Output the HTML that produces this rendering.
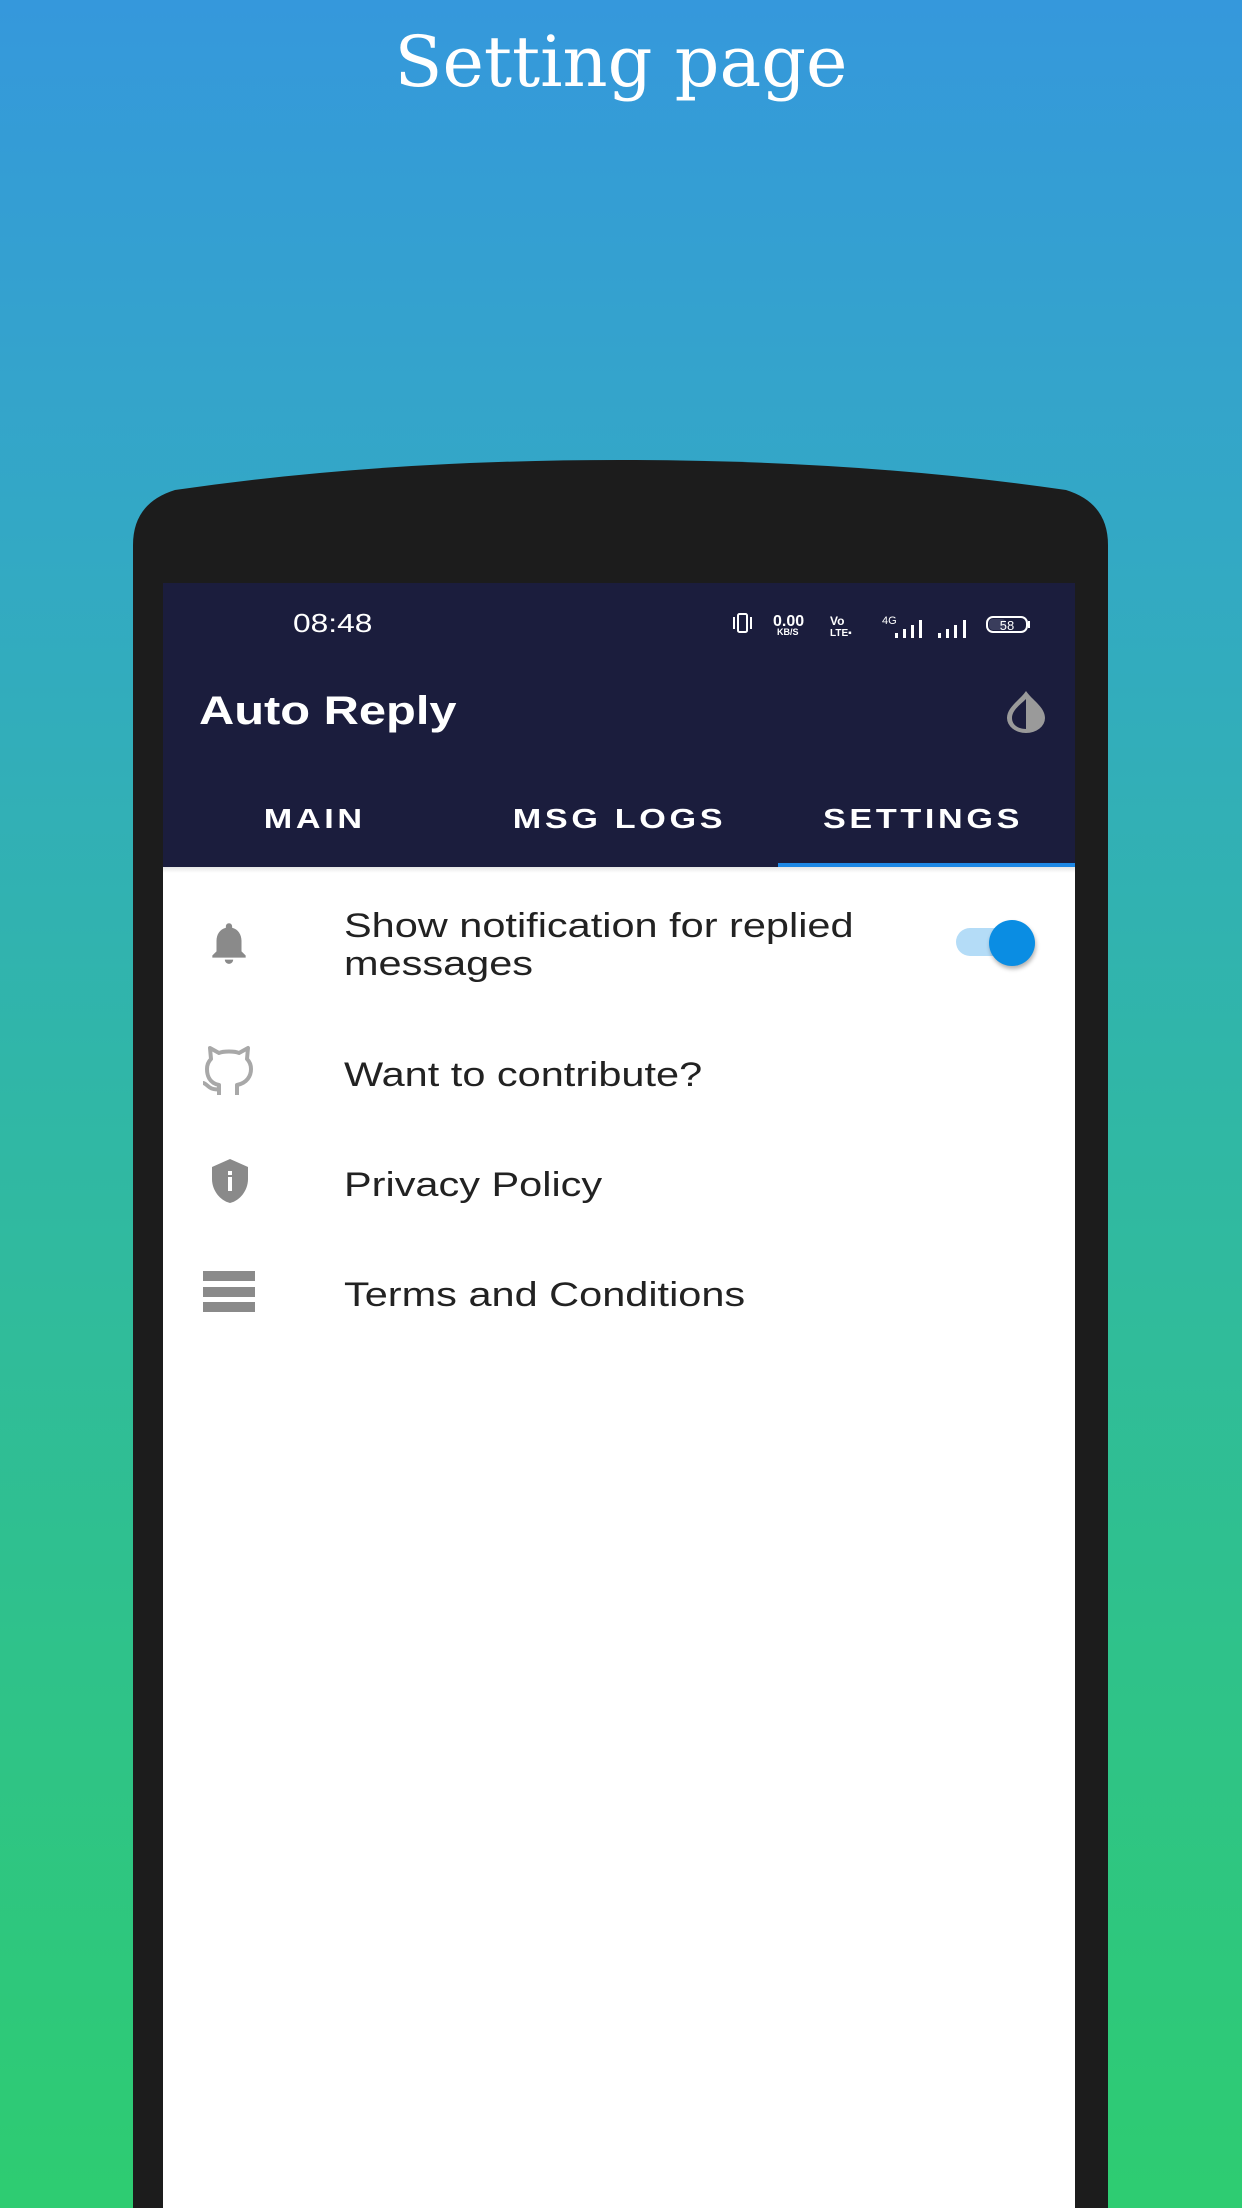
<!DOCTYPE html>
<html><head><meta charset="utf-8"><style>
*{margin:0;padding:0;box-sizing:border-box}
body{width:1242px;height:2208px;overflow:hidden;position:relative;font-family:"Liberation Sans",sans-serif;background:linear-gradient(180deg,#3598dc 0%,#33a9c4 25%,#30b7a6 50%,#2fc28a 75%,#2ecc71 100%)}
.abs{position:absolute}
.title{left:0;width:1242px;top:12px;text-align:center;color:#fff;font-family:"DejaVu Serif","Liberation Serif",serif;font-size:70px;line-height:100px}
.bar{background:#1b1d3d}
.sx{transform:scaleX(1.22);transform-origin:0 0}
.t{color:#222;font-size:34px;white-space:nowrap}
.tab{color:#fff;font-size:28px;font-weight:bold;letter-spacing:3px;width:304px;text-align:center;top:801px;line-height:36px}
.tab span{display:inline-block;transform:scaleX(1.22)}
</style></head><body>
<div class="abs title">Setting page</div>
<svg class="abs" style="left:0;top:0" width="1242" height="2208">
<path d="M133,2208 L133,545 Q133,503 175,490 Q380,460 620,460 Q860,460 1066,490 Q1108,503 1108,545 L1108,2208 Z" fill="#1c1c1c"/>
</svg>
<div class="abs" style="left:163px;top:583px;width:912px;height:1625px;background:#fff"></div>
<div class="abs bar" style="left:163px;top:583px;width:912px;height:284px"></div>
<div class="abs" style="left:163px;top:867px;width:912px;height:6px;background:linear-gradient(#e6e6e6,#fff)"></div>
<div class="abs" style="left:778px;top:863px;width:297px;height:4px;background:#1e88e5"></div>
<div class="abs sx" style="left:293px;top:607px;color:#fff;font-size:26px;line-height:32px">08:48</div>
<svg class="abs" style="left:725px;top:605px" width="320" height="40">
<g fill="none" stroke="#fff" stroke-width="2">
<rect x="13" y="9" width="9" height="18" rx="1.5"/>
<path d="M9,12 v12 M26,12 v12"/>
<rect x="262" y="12" width="40" height="15" rx="6"/>
</g>
<rect x="264" y="14" width="17" height="11" rx="4" fill="#3a3d5c"/>
<text x="282" y="25" fill="#fff" font-size="13" font-family="Liberation Sans" text-anchor="middle">58</text>
<path d="M303,16 h2 v7 h-2z" fill="#fff"/>
<text x="48" y="21" fill="#fff" font-size="16" font-weight="bold" font-family="Liberation Sans">0.00</text>
<text x="52" y="30" fill="#fff" font-size="9" font-weight="bold" font-family="Liberation Sans">KB/S</text>
<text x="105" y="20" fill="#fff" font-size="12" font-weight="bold" font-family="Liberation Sans">Vo</text>
<text x="105" y="31" fill="#fff" font-size="10" font-weight="bold" font-family="Liberation Sans">LTE▪</text>
<text x="157" y="19" fill="#fff" font-size="11" font-family="Liberation Sans">4G</text>
<g fill="#fff"><rect x="170" y="28" width="3" height="5"/><rect x="178" y="24" width="3" height="9"/><rect x="186" y="20" width="3" height="13"/><rect x="194" y="15" width="3" height="18"/>
<rect x="213" y="28" width="3" height="5"/><rect x="221" y="24" width="3" height="9"/><rect x="229" y="20" width="3" height="13"/><rect x="238" y="15" width="3" height="18"/></g>
</svg>
<div class="abs sx" style="left:199px;top:686px;color:#fff;font-size:40px;font-weight:bold;line-height:50px">Auto Reply</div>
<svg class="abs" style="left:1003px;top:690px" width="46" height="44" viewBox="0 0 46 44">
<path d="M23,1 C29,10 42,17 42,28 A19,15 0 0 1 4,28 C4,17 17,10 23,1Z" fill="#9a9a9a"/>
<path d="M23,9 L23,39 C14,39 9,34 9,28 C9,20 18,14 23,9Z" fill="#1b1d3d"/>
</svg>
<div class="abs tab" style="left:163px"><span>MAIN</span></div>
<div class="abs tab" style="left:467px"><span>MSG LOGS</span></div>
<div class="abs tab" style="left:771px"><span>SETTINGS</span></div>

<svg class="abs" style="left:203px;top:918px" width="52" height="50" viewBox="0 0 24 24">
<path fill="#8a8a8a" d="M12 22c1.1 0 2-.9 2-2h-4c0 1.1.9 2 2 2zm6-6v-5c0-3.070-1.64-5.64-4.5-6.32V4c0-.83-.67-1.5-1.5-1.5s-1.5.67-1.5 1.5v.68C7.63 5.36 6 7.920 6 11v5l-2 2v1h16v-1l-2-2z"/>
</svg>
<div class="abs t sx" style="left:344px;top:907px;line-height:38px">Show notification for replied<br>messages</div>
<div class="abs" style="left:956px;top:928px;width:72px;height:28px;border-radius:14px;background:#b4dcf7"></div>
<div class="abs" style="left:989px;top:920px;width:46px;height:46px;border-radius:50%;background:#0a8de3;box-shadow:1px 3px 4px rgba(0,0,0,.3)"></div>

<svg class="abs" style="left:199px;top:1045px" width="60" height="52" viewBox="0 0 60 52">
<path d="M20,50 V40 C10,38 8,30 8,24 C8,19 10,16 12,14 L11,3 L20,8 C24,6 36,6 40,8 L49,3 L48,14 C50,16 52,19 52,24 C52,31 48,38 38,40 V50 M20,44 C10,46 8,38 4,38" fill="none" stroke="#a8a8a8" stroke-width="4" stroke-linejoin="round"/>
</svg>
<div class="abs t sx" style="left:344px;top:1055px;line-height:40px">Want to contribute?</div>

<svg class="abs" style="left:205px;top:1157px" width="50" height="48" viewBox="0 0 24 24">
<path fill="#8a8a8a" d="M12 1L3 5v6c0 5.55 3.84 10.74 9 12 5.16-1.26 9-6.45 9-12V5l-9-4z"/>
<rect x="11" y="10" width="2" height="7" fill="#fff"/><rect x="11" y="7" width="2" height="2" fill="#fff"/>
</svg>
<div class="abs t sx" style="left:344px;top:1165px;line-height:40px">Privacy Policy</div>

<div class="abs" style="left:203px;top:1271px;width:52px;height:10px;background:#8a8a8a"></div>
<div class="abs" style="left:203px;top:1287px;width:52px;height:10px;background:#8a8a8a"></div>
<div class="abs" style="left:203px;top:1302px;width:52px;height:10px;background:#8a8a8a"></div>
<div class="abs t sx" style="left:344px;top:1275px;line-height:40px">Terms and Conditions</div>
</body></html>
